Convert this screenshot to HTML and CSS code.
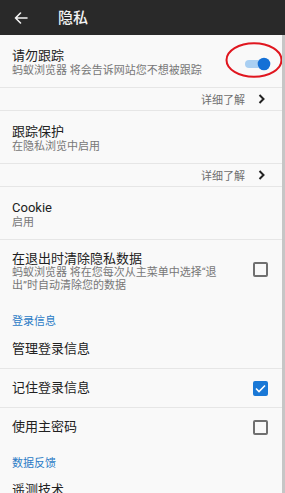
FILE: index.html
```html
<!DOCTYPE html>
<html lang="zh-CN">
<head>
<meta charset="utf-8">
<title>隐私</title>
<link rel="stylesheet" href="styles.css">
</head>
<body>
<div class="screen">
  <header class="appbar">
    <svg class="back" width="14" height="12" viewBox="0 0 14 12"><path d="M13 6H1.5M6.5 1L1.5 6L6.5 11" fill="none" stroke="#f2f2f2" stroke-width="1.6" stroke-linecap="round" stroke-linejoin="round"/></svg>
    <h1 class="appbar-title">隐私</h1>
  </header>
  <div class="body">
    <main class="list">
      <div class="row row-two row-toggle divider">
        <div class="text">
          <div class="title">请勿跟踪</div>
          <div class="sub">蚂蚁浏览器 将会告诉网站您不想被跟踪</div>
        </div>
        <svg class="toggle" width="26" height="14" viewBox="0 0 26 14"><rect x="0" y="3" width="22" height="8" rx="4" fill="#a9cff2"/><circle cx="19" cy="7" r="6.3" fill="#1470d6"/></svg>
        <svg class="mark" width="58" height="36" viewBox="0 0 58 36"><ellipse cx="29" cy="18" rx="27.5" ry="16.8" fill="none" stroke="#e0161f" stroke-width="2"/></svg>
      </div>
      <div class="more divider"><span>详细了解</span><svg width="7" height="10" viewBox="0 0 7 10"><path d="M1.5 1L5.5 5L1.5 9" fill="none" stroke="#222" stroke-width="2"/></svg></div>
      <div class="row row-two divider">
        <div class="text">
          <div class="title">跟踪保护</div>
          <div class="sub">在隐私浏览中启用</div>
        </div>
      </div>
      <div class="more divider"><span>详细了解</span><svg width="7" height="10" viewBox="0 0 7 10"><path d="M1.5 1L5.5 5L1.5 9" fill="none" stroke="#222" stroke-width="2"/></svg></div>
      <div class="row row-two divider">
        <div class="text">
          <div class="title">Cookie</div>
          <div class="sub">启用</div>
        </div>
      </div>
      <div class="row row-clear">
        <div class="text">
          <div class="title">在退出时清除隐私数据</div>
          <div class="sub sub-multi">蚂蚁浏览器 将在您每次从主菜单中选择“退<br>出”时自动清除您的数据</div>
        </div>
        <span class="check"></span>
      </div>
      <div class="section">登录信息</div>
      <div class="row row-one divider"><div class="title">管理登录信息</div></div>
      <div class="row row-one divider"><div class="title">记住登录信息</div><span class="check checked"><svg width="11" height="9" viewBox="0 0 11 9"><path d="M1 4.5L4 7.5L10 1.5" fill="none" stroke="#fff" stroke-width="1.6"/></svg></span></div>
      <div class="row row-one"><div class="title">使用主密码</div><span class="check"></span></div>
      <div class="section section-2">数据反馈</div>
      <div class="row row-one"><div class="title">遥测技术</div></div>
    </main>
    <div class="scrollbar"></div>
  </div>
</div>
</body>
</html>
```
FILE: styles.css
```css
* { box-sizing: border-box; }
html, body { margin: 0; padding: 0; }
body {
  width: 285px;
  height: 493px;
  overflow: hidden;
  font-family: Roboto, "Noto Sans CJK SC", sans-serif;
  background: #f9f9f9;
}
.screen {
  width: 285px;
  height: 493px;
  display: flex;
  flex-direction: column;
  overflow: hidden;
}
.appbar {
  height: 35px;
  flex: none;
  background: #292929;
  display: flex;
  align-items: center;
  padding-left: 14px;
}
.back { display: block; }
.appbar-title {
  margin: 0 0 0 30px;
  font-size: 15px;
  font-weight: 500;
  color: #f2f2f2;
  line-height: 20px;
}
.body {
  flex: 1;
  display: flex;
  min-height: 0;
}
.list {
  flex: 1;
  background: #f9f9f9;
  overflow: hidden;
}
.scrollbar {
  width: 3px;
  flex: none;
  background: #c6c6c6;
}
.divider { border-bottom: 1px solid #e6e6e6; }
.row {
  display: flex;
  align-items: center;
  justify-content: space-between;
  padding-left: 12px;
  padding-right: 14px;
  position: relative;
}
.row-two {
  height: 53px;
  padding-top: 13px;
  padding-bottom: 10px;
  align-items: flex-start;
}
.row-toggle { align-items: center; padding-right: 11px; }
.row-one { height: 38px; }
.row-one.divider { height: 39px; }
.row-clear {
  padding-top: 11px;
  padding-bottom: 9px;
}
.title {
  font-size: 13px;
  line-height: 16px;
  color: #212121;
}
.sub {
  font-size: 11px;
  line-height: 13px;
  color: #777;
}
.sub-multi { line-height: 12.5px; }
.toggle { display: block; margin-top: 2px; }
.mark {
  position: absolute;
  left: 225px;
  top: 7px;
}
.more {
  height: 23px;
  display: flex;
  justify-content: flex-end;
  align-items: center;
  gap: 13px;
  padding-right: 17px;
  font-size: 11px;
  color: #6f6f6f;
}
.more svg { display: block; }
.check {
  width: 15px;
  height: 15px;
  border: 2px solid #707070;
  border-radius: 2px;
  flex: none;
  display: flex;
  align-items: center;
  justify-content: center;
}
.row-clear .check { margin-top: -5px; }
.check.checked {
  background: #1a78d6;
  border-color: #1a78d6;
}
.check svg { display: block; }
.section {
  font-size: 11px;
  line-height: 14px;
  color: #2b7bc6;
  padding: 14px 12px 1px;
}
.section-2 { padding-top: 11px; padding-bottom: 0; }
```
